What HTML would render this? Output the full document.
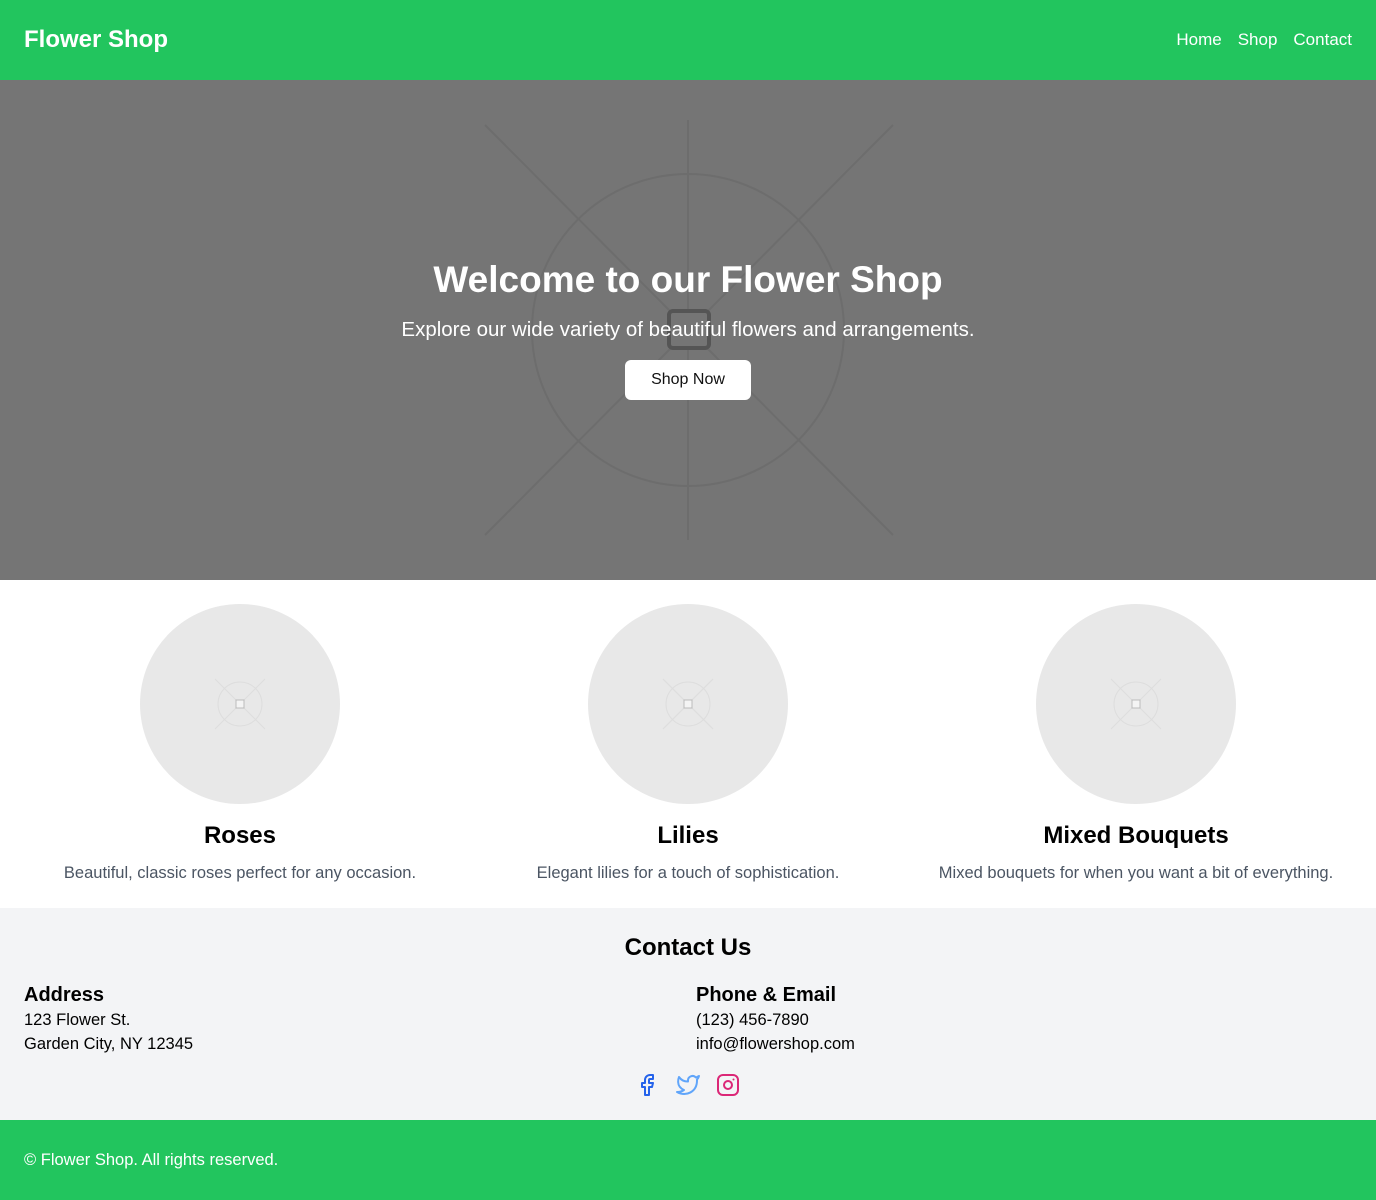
<!DOCTYPE html>
<html><head><meta charset="utf-8"><style>
*{margin:0;padding:0;box-sizing:border-box}
body{width:1376px;height:1200px;font-family:"Liberation Sans",sans-serif;background:#fff;color:#000;overflow:hidden}
header{height:80px;background:#22c55e;display:flex;align-items:center;justify-content:space-between;padding:0 24px;color:#fff}
header h1{font-size:24px;font-weight:700}
nav a{color:#fff;text-decoration:none;font-size:17px;margin-left:16px}
.hero{position:relative;height:500px;background:#757575;color:#fff;text-align:center}
.hero svg{position:absolute;left:0;top:0}
.hero h2{position:absolute;left:0;right:0;top:178px;font-size:37px;font-weight:700;line-height:44px}
.hero p{position:absolute;left:0;right:0;top:238px;font-size:20.5px;line-height:24px}
.btn{position:absolute;left:625px;top:280px;width:126px;height:40px;background:#fff;color:#111;border-radius:6px;font-size:16px;line-height:40px}
.cards{display:flex;height:328px;padding:0 32px;gap:32px}
.card{flex:1 1 0;text-align:center;padding-top:24px;white-space:nowrap}
.circ{width:200px;height:200px;border-radius:50%;background:#e8e8e8;margin:0 auto;position:relative}
.card h3{font-size:24px;font-weight:700;margin-top:18px}
.card p{color:#4b5563;font-size:16.5px;margin-top:14px}
.contact{background:#f3f4f6;height:212px;position:relative}
.contact h2{text-align:center;font-size:24px;padding-top:26px}
.col{position:absolute;top:74px;font-size:16.5px;line-height:24px}
.col b{font-size:20px;display:block;line-height:26px}
footer{background:#22c55e;height:80px;color:#fff;padding:0 24px;line-height:80px;font-size:16.5px}
</style></head><body>
<header><h1>Flower Shop</h1><nav><a>Home</a><a>Shop</a><a>Contact</a></nav></header>
<div class="hero">
<svg width="1376" height="500" stroke="#6d6d6d" stroke-width="2" fill="none">
<circle cx="688" cy="250" r="156"/>
<line x1="688" y1="40" x2="688" y2="460"/>
<line x1="485" y1="45" x2="893" y2="455"/>
<line x1="893" y1="45" x2="485" y2="455"/>
<rect x="669" y="231" width="40" height="37" rx="4" fill="#757575" stroke="#555" stroke-width="4"/>
</svg>
<h2>Welcome to our Flower Shop</h2>
<p>Explore our wide variety of beautiful flowers and arrangements.</p>
<div class="btn">Shop Now</div>
</div>
<div class="cards">
<div class="card"><div class="circ"><svg width="200" height="200" stroke="#ddd" fill="none"><circle cx="100" cy="100" r="22"/><line x1="75" y1="75" x2="125" y2="125"/><line x1="125" y1="75" x2="75" y2="125"/><rect x="96" y="96" width="8" height="8" stroke="#bbb" fill="#f4f4f4"/></svg></div><h3>Roses</h3><p>Beautiful, classic roses perfect for any occasion.</p></div>
<div class="card"><div class="circ"><svg width="200" height="200" stroke="#ddd" fill="none"><circle cx="100" cy="100" r="22"/><line x1="75" y1="75" x2="125" y2="125"/><line x1="125" y1="75" x2="75" y2="125"/><rect x="96" y="96" width="8" height="8" stroke="#bbb" fill="#f4f4f4"/></svg></div><h3>Lilies</h3><p>Elegant lilies for a touch of sophistication.</p></div>
<div class="card"><div class="circ"><svg width="200" height="200" stroke="#ddd" fill="none"><circle cx="100" cy="100" r="22"/><line x1="75" y1="75" x2="125" y2="125"/><line x1="125" y1="75" x2="75" y2="125"/><rect x="96" y="96" width="8" height="8" stroke="#bbb" fill="#f4f4f4"/></svg></div><h3>Mixed Bouquets</h3><p>Mixed bouquets for when you want a bit of everything.</p></div>
</div>
<div class="contact">
<h2>Contact Us</h2>
<div class="col" style="left:24px"><b>Address</b>123 Flower St.<br>Garden City, NY 12345</div>
<div class="col" style="left:696px"><b>Phone &amp; Email</b>(123) 456-7890<br>info@flowershop.com</div>
<svg style="position:absolute;left:636px;top:164px" width="110" height="26" fill="none" stroke-width="2" stroke-linecap="round" stroke-linejoin="round">
<path d="M17 2h-3a5 5 0 0 0-5 5v3H6v4h3v8h4v-8h3l1-4h-4V7a1 1 0 0 1 1-1h3z" stroke="#2563eb" transform="translate(0,1)"/>
<path d="M23 3a10.9 10.9 0 0 1-3.14 1.53 4.48 4.48 0 0 0-7.86 3v1A10.66 10.66 0 0 1 3 4s-4 9 5 13a11.64 11.64 0 0 1-7 2c9 5 20 0 20-11.5a4.5 4.5 0 0 0-.08-.83A7.72 7.72 0 0 0 23 3z" stroke="#60a5fa" transform="translate(40,1)"/>
<g stroke="#db2777" transform="translate(80,1)"><rect x="2" y="2" width="20" height="20" rx="5"/><circle cx="12" cy="12" r="4"/><line x1="17.5" y1="6.5" x2="17.5" y2="6.5"/></g>
</svg>
</div>
<footer>© Flower Shop. All rights reserved.</footer>
</body></html>
